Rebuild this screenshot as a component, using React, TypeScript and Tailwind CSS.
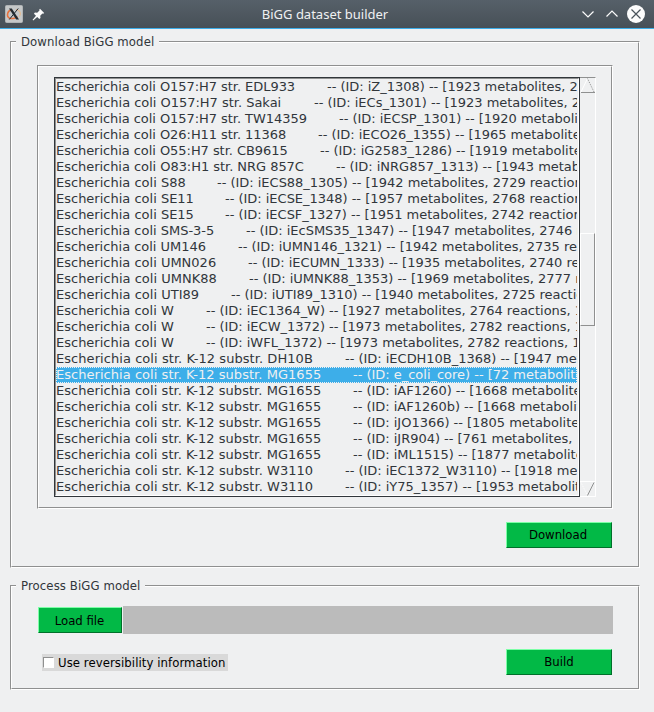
import React from "react";

type Row = { name: string; offset: number; tracking: number; detail: string; selected?: boolean };

const rows: Row[] = [
  { name: "Escherichia coli O157:H7 str. EDL933", offset: 271, tracking: -0.055, detail: "-- (ID: iZ_1308) -- [1923 metabolites, 2" },
  { name: "Escherichia coli O157:H7 str. Sakai", offset: 258, tracking: -0.02, detail: "-- (ID: iECs_1301) -- [1923 metabolites, 2" },
  { name: "Escherichia coli O157:H7 str. TW14359", offset: 283, tracking: -0.055, detail: "-- (ID: iECSP_1301) -- [1920 metabolites" },
  { name: "Escherichia coli O26:H11 str. 11368", offset: 262, tracking: -0.055, detail: "-- (ID: iECO26_1355) -- [1965 metabolites" },
  { name: "Escherichia coli O55:H7 str. CB9615", offset: 264, tracking: -0.055, detail: "-- (ID: iG2583_1286) -- [1919 metabolites" },
  { name: "Escherichia coli O83:H1 str. NRG 857C", offset: 280, tracking: -0.04, detail: "-- (ID: iNRG857_1313) -- [1943 metabolites" },
  { name: "Escherichia coli S88", offset: 161, tracking: 0, detail: "-- (ID: iECS88_1305) -- [1942 metabolites, 2729 reactions" },
  { name: "Escherichia coli SE11", offset: 169, tracking: 0, detail: "-- (ID: iECSE_1348) -- [1957 metabolites, 2768 reactions" },
  { name: "Escherichia coli SE15", offset: 169, tracking: 0, detail: "-- (ID: iECSF_1327) -- [1951 metabolites, 2742 reactions" },
  { name: "Escherichia coli SMS-3-5", offset: 190, tracking: -0.01, detail: "-- (ID: iEcSMS35_1347) -- [1947 metabolites, 2746 reactions" },
  { name: "Escherichia coli UM146", offset: 182, tracking: -0.02, detail: "-- (ID: iUMN146_1321) -- [1942 metabolites, 2735 reactions" },
  { name: "Escherichia coli UMN026", offset: 192, tracking: 0, detail: "-- (ID: iECUMN_1333) -- [1935 metabolites, 2740 reactions" },
  { name: "Escherichia coli UMNK88", offset: 193, tracking: 0.02, detail: "-- (ID: iUMNK88_1353) -- [1969 metabolites, 2777 reactions" },
  { name: "Escherichia coli UTI89", offset: 175, tracking: 0.02, detail: "-- (ID: iUTI89_1310) -- [1940 metabolites, 2725 reactions" },
  { name: "Escherichia coli W", offset: 150, tracking: 0, detail: "-- (ID: iEC1364_W) -- [1927 metabolites, 2764 reactions, 1" },
  { name: "Escherichia coli W", offset: 150, tracking: 0, detail: "-- (ID: iECW_1372) -- [1973 metabolites, 2782 reactions, 1" },
  { name: "Escherichia coli W", offset: 150, tracking: 0, detail: "-- (ID: iWFL_1372) -- [1973 metabolites, 2782 reactions, 1" },
  { name: "Escherichia coli str. K-12 substr. DH10B", offset: 289, tracking: 0.06, detail: "-- (ID: iECDH10B_1368) -- [1947 metabolites" },
  { name: "Escherichia coli str. K-12 substr. MG1655", offset: 297, tracking: 0.04, detail: "-- (ID: e_coli_core) -- [72 metabolites", selected: true },
  { name: "Escherichia coli str. K-12 substr. MG1655", offset: 297, tracking: 0.04, detail: "-- (ID: iAF1260) -- [1668 metabolites" },
  { name: "Escherichia coli str. K-12 substr. MG1655", offset: 297, tracking: 0.04, detail: "-- (ID: iAF1260b) -- [1668 metabolites" },
  { name: "Escherichia coli str. K-12 substr. MG1655", offset: 297, tracking: 0.04, detail: "-- (ID: iJO1366) -- [1805 metabolites" },
  { name: "Escherichia coli str. K-12 substr. MG1655", offset: 297, tracking: 0.04, detail: "-- (ID: iJR904) -- [761 metabolites, " },
  { name: "Escherichia coli str. K-12 substr. MG1655", offset: 297, tracking: 0.04, detail: "-- (ID: iML1515) -- [1877 metabolites" },
  { name: "Escherichia coli str. K-12 substr. W3110", offset: 289, tracking: 0.05, detail: "-- (ID: iEC1372_W3110) -- [1918 metabolites" },
  { name: "Escherichia coli str. K-12 substr. W3110", offset: 289, tracking: 0.05, detail: "-- (ID: iY75_1357) -- [1953 metabolites" },
];

function TitleBar() {
  return (
    <header className="flex h-[29px] items-center justify-between border-b border-[#3daee9] bg-linear-to-b from-[#566069] to-[#475057] pr-[9px] pl-[5px]">
      <div className="flex w-[100px] items-center gap-[9px]">
        <svg width="18" height="18" viewBox="0 0 18 18">
          <rect x="0.5" y="0.5" width="17" height="17" rx="1" fill="#c5c8c9" stroke="#b0b4b6" />
          <path d="M6.500 4.800C2 6 1.500 11 4 12.800c2 1.500 6 .8 8.500-1.200" fill="none" stroke="#e8713c" strokeWidth="1.500" />
          <path d="M11 4.500c4 .5 5.500 4 3.500 7" fill="none" stroke="#e6b98c" strokeWidth="1.200" />
          <path d="M4 3.500h2.800l7.200 11h-2.800z" fill="#222a30" />
          <path d="M13.200 3.500 4.300 14.500" stroke="#222a30" strokeWidth="1" />
        </svg>
        <svg width="13" height="13" viewBox="0 0 13 13" fill="#fcfcfc">
          <path d="M8 .8 12.200 5l-1 .8-.8-.3-2.200 2.300.3 2.300-1.200 1L5.200 9 1.200 12.400.6 11.800 4 7.800 1.900 5.700l1-1.200 2.300.3 2.300-2.200-.3-.8z" />
        </svg>
      </div>
      <h1 className="-mt-px font-['Noto_Sans',sans-serif] text-[13px] leading-4 text-[#eff0f1]">BiGG dataset builder</h1>
      <div className="flex w-[100px] items-center justify-end">
        <svg className="mr-[10px]" width="14" height="18" viewBox="0 0 14 18" fill="none" stroke="#fcfcfc" strokeWidth="1.200">
          <path d="m1.500 6.500 5.500 5.500 5.500-5.500" />
        </svg>
        <svg className="mr-2" width="14" height="18" viewBox="0 0 14 18" fill="none" stroke="#fcfcfc" strokeWidth="1.200">
          <path d="m1.500 11.500L7 6l5.500 5.500" />
        </svg>
        <svg width="18" height="18" viewBox="0 0 18 18">
          <circle cx="9" cy="9" r="9" fill="#fcfcfc" />
          <path d="m4.500 4.500 9 9m0-9-9 9" stroke="#4a535b" strokeWidth="1.200" />
        </svg>
      </div>
    </header>
  );
}

function Groove({ className, children }: { className: string; children: React.ReactNode }) {
  return (
    <div className={`border border-t-[#8f9090] border-r-white border-b-white border-l-[#8f9090] ${className}`}>
      <div className="h-full border border-t-white border-r-[#8f9090] border-b-[#8f9090] border-l-white">{children}</div>
    </div>
  );
}

function Legend({ className, children }: { className: string; children: React.ReactNode }) {
  return (
    <h2 className={`relative -top-[9px] left-[4px] h-4 bg-[#eff0f1] pl-[5px] text-[13px] leading-4 tracking-[0.1px] whitespace-nowrap text-[#31363b] ${className}`}>
      {children}
    </h2>
  );
}

function GreenButton({ className, children }: { className: string; children: React.ReactNode }) {
  return (
    <button
      className={`h-[26px] border border-t-[#7dffa7] border-r-[#00702a] border-b-[#00702a] border-l-[#7dffa7] bg-[#02b946] text-center text-[13px] text-black ${className}`}
    >
      {children}
    </button>
  );
}

function ScrollBar() {
  return (
    <div className="flex h-[420px] w-4 flex-col border-t border-r border-t-[#8f9090] border-r-white">
      <svg width="15" height="15" viewBox="0 0 15 15" fill="none">
        <path d="M7.500.5 1 14" stroke="#fff" />
        <path d="M7.500.5 14 14" stroke="#8f9090" strokeDasharray="1 1" />
        <path d="M1 14.500h14" stroke="#8f9090" />
      </svg>
      <div className="mt-[140px] h-[93px] border border-t-white border-r-[#8f9090] border-b-[#8f9090] border-l-white" />
      <div className="grow" />
      <svg width="15" height="16" viewBox="0 0 15 16" fill="none">
        <path d="M0 .5h15M0 15.500h15" stroke="#fff" />
        <path d="m1 1.500 6.500 13" stroke="#fff" strokeDasharray="1 1" />
        <path d="M14 1.500 7.500 14.500" stroke="#8f9090" />
      </svg>
    </div>
  );
}

export default function App() {
  return (
    <main className="flex h-[712px] w-[654px] flex-col overflow-hidden bg-[#eff0f1] font-['DejaVu_Sans_Condensed','DejaVu_Sans',sans-serif]">
      <TitleBar />
      <Groove className="mt-3 ml-[10px] h-[527px] w-[630px]">
        <Legend className="w-[143px]">Download BiGG model</Legend>
        <Groove className="mt-[6px] ml-[25px] h-[444px] w-[576px]">
          <div className="flex pt-[10px] pl-[15px]">
            <div className="h-[420px] w-[526px] border border-[#31363b]">
              <ul className="h-full overflow-hidden border border-t-[#8f9090] border-r-white border-b-white border-l-[#8f9090] font-['DejaVu_Sans',sans-serif] text-[13px] leading-4 text-[#31363b]">
                {rows.map((row, i) => (
                  <li
                    key={i}
                    className={
                      row.selected
                        ? "mr-px flex h-4 overflow-hidden whitespace-pre bg-[#3daee9] text-[#eff0f1] outline-1 -outline-offset-1 outline-dotted outline-[#eff0f1]"
                        : "mr-px flex h-4 overflow-hidden whitespace-pre"
                    }
                  >
                    <span className="shrink-0" style={{ width: row.offset, letterSpacing: row.tracking }}>{row.name}</span>
                    <span className="tracking-[-0.02px]">{row.detail}</span>
                  </li>
                ))}
              </ul>
            </div>
            <ScrollBar />
          </div>
        </Groove>
        <GreenButton className="mt-[13px] ml-[494px] block w-[106px] pr-0.5 pb-px leading-[21px]">Download</GreenButton>
      </Groove>
      <Groove className="mt-[17px] ml-[10px] h-[105px] w-[630px]">
        <Legend className="w-[129px]">Process BiGG model</Legend>
        <div className="ml-[26px] flex items-center gap-px pt-[3px]">
          <GreenButton className="w-[84px] pr-px leading-[23px]">Load file</GreenButton>
          <div className="h-7 w-[490px] bg-[#bbbbbb]" />
        </div>
        <div className="mt-[15px] ml-[30px] flex w-[570px] justify-between">
          <label className="mt-[5px] flex h-[17px] w-[186px] items-center bg-[#d9d9d9] pl-px text-[13px] leading-4 tracking-[0.07px] whitespace-nowrap text-black">
            <span className="mr-1 size-[11px] border border-t-[#8f9090] border-r-white border-b-white border-l-[#8f9090] bg-white" />
            Use reversibility information
          </label>
          <GreenButton className="w-[106px] pb-px leading-[21px]">Build</GreenButton>
        </div>
      </Groove>
    </main>
  );
}
